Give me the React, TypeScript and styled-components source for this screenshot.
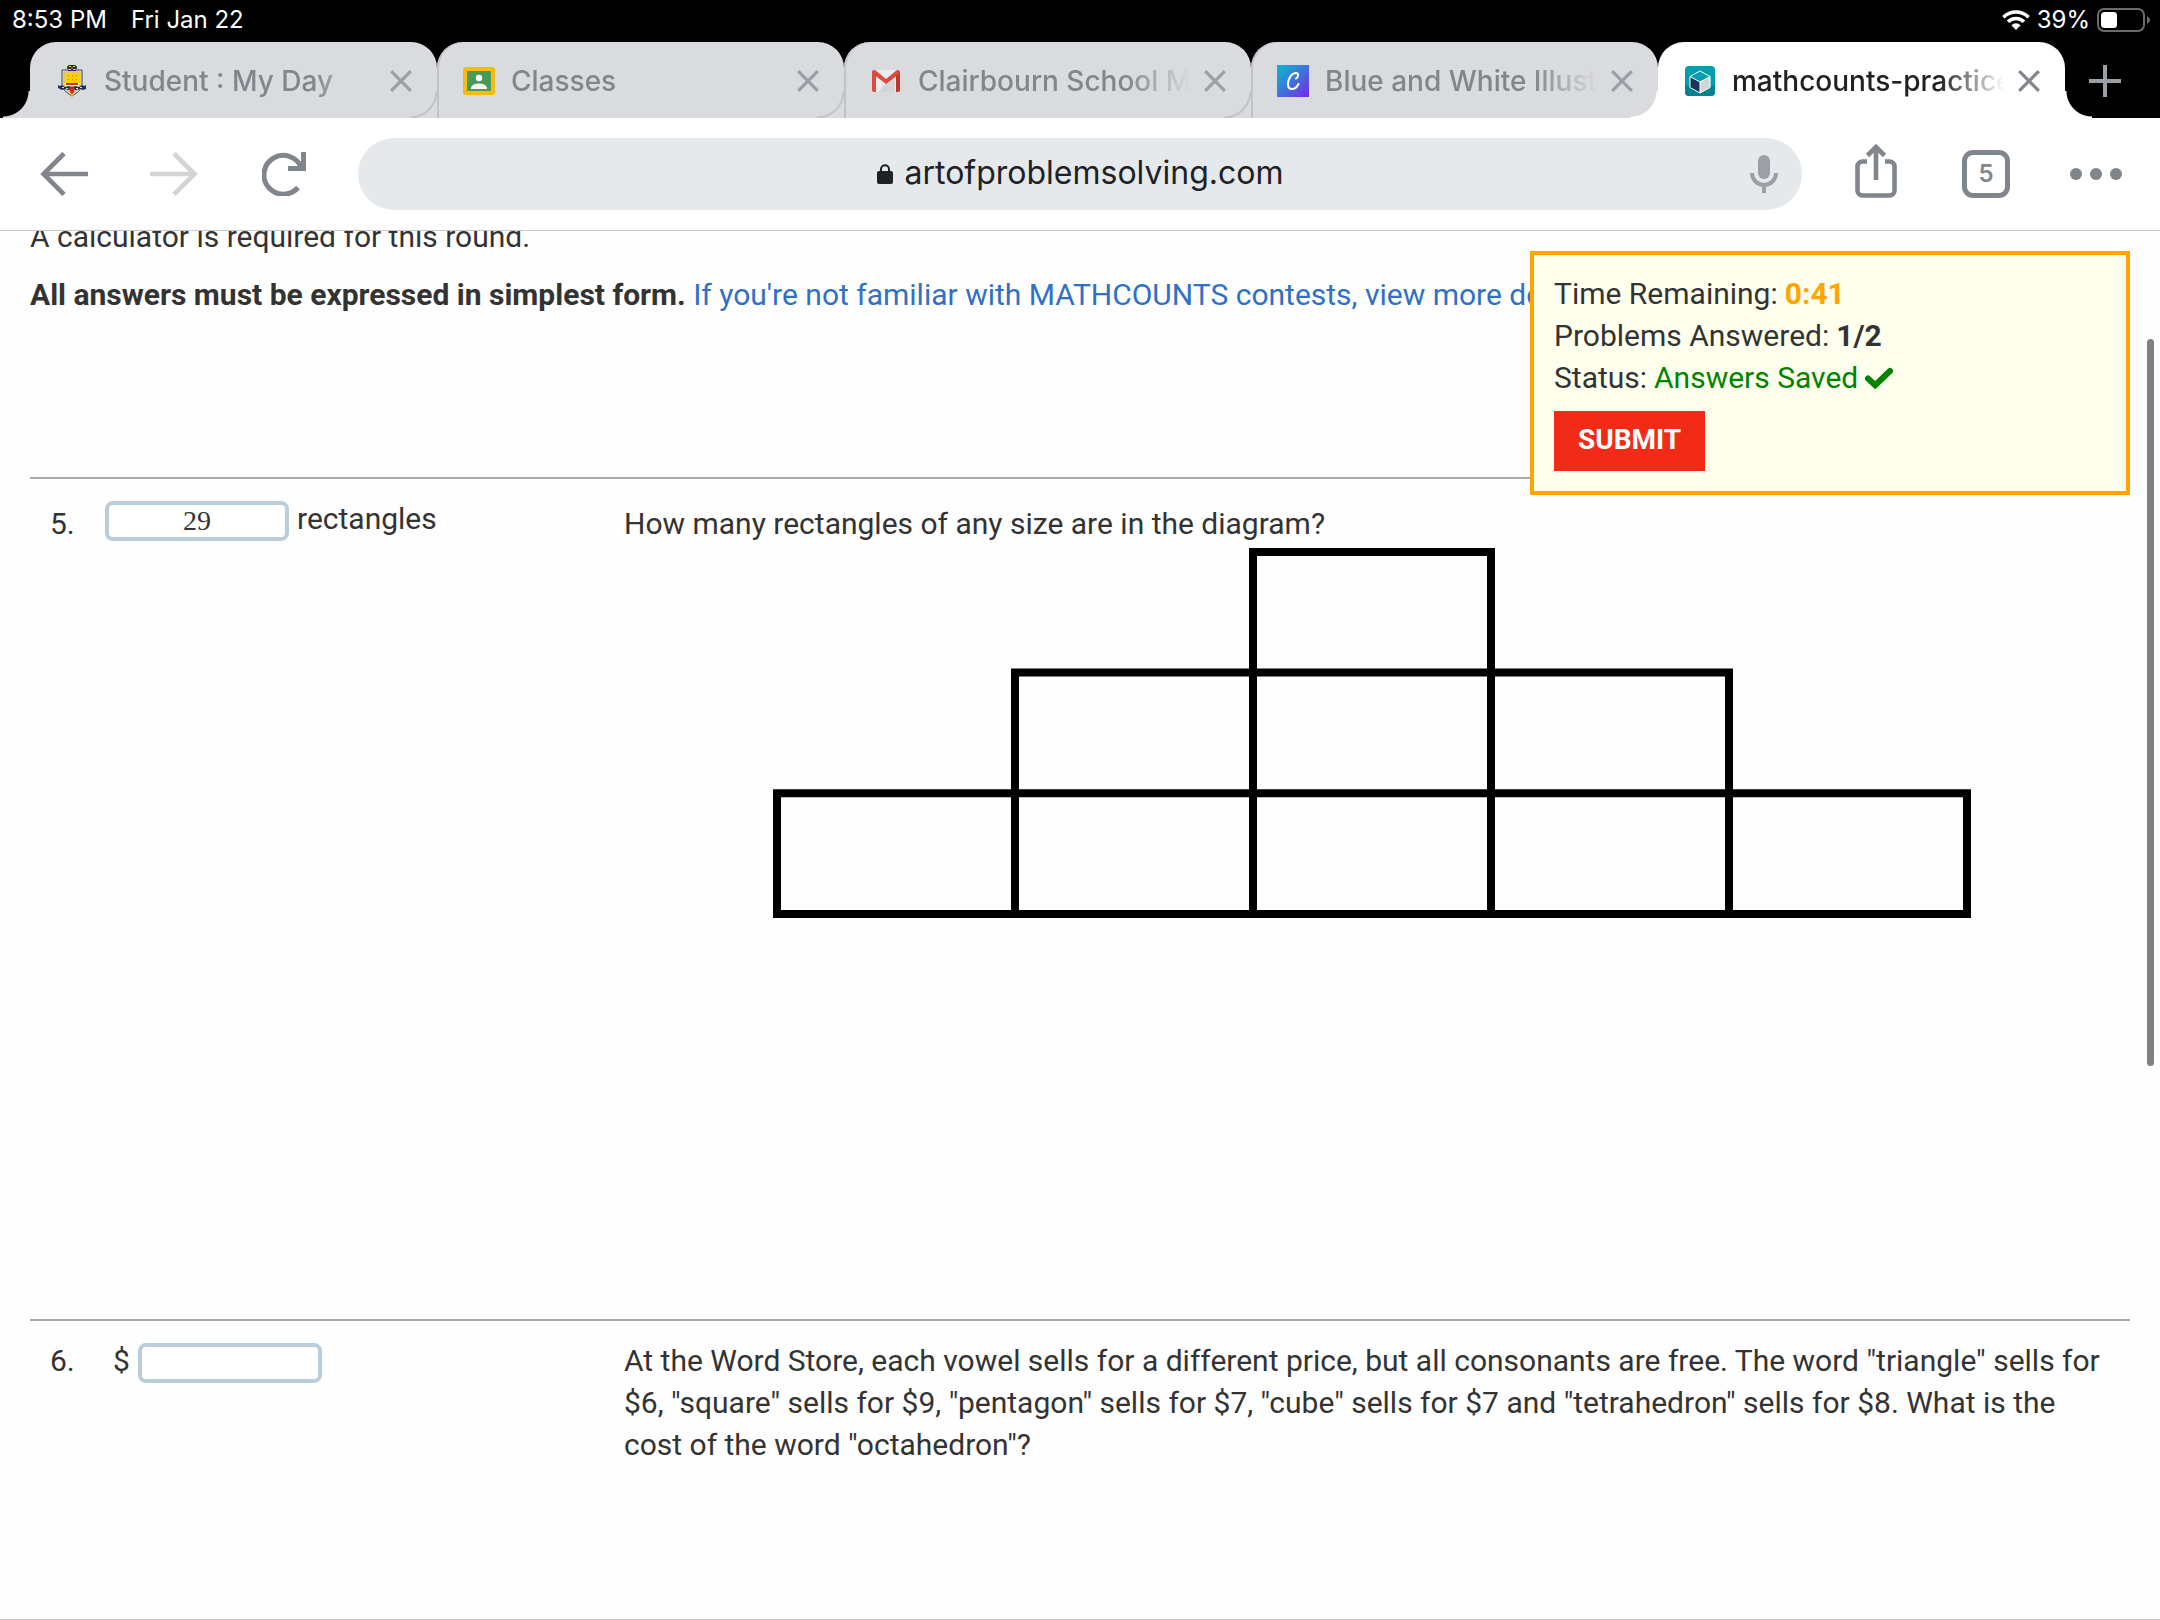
import React from "react";
import styled, { createGlobalStyle, css } from "styled-components";

const GlobalStyle = createGlobalStyle`
  *, *::before, *::after { box-sizing: border-box; }
  html, body { margin: 0; padding: 0; }
  body { background: #fefefe; }
  button, input { font: inherit; color: inherit; margin: 0; padding: 0; border: 0; background: none; }
  svg { display: block; flex: none; }
`;

const uiFont = `Inter, "Liberation Sans", sans-serif`;
const pageFont = `Roboto, "Liberation Sans", sans-serif`;
const tabGray = "#dadbdf";
const tabLine = "#c1c3c8";
const iconGray = "#80868b";

const Screen = styled.div`
  display: flex;
  flex-direction: column;
  height: 100vh;
  overflow: hidden;
  font-family: ${uiFont};
`;

/* ---------- status bar ---------- */

const StatusBar = styled.header`
  display: flex;
  justify-content: space-between;
  align-items: center;
  height: 42px;
  padding: 0 10px 2px 12px;
  background: #000;
  color: #fff;
  font-size: 24px;
  line-height: 28px;
`;

const StatusGroup = styled.div<{ $gap: number }>`
  display: flex;
  align-items: center;
  gap: ${(p) => p.$gap}px;
`;

/* ---------- tab strip ---------- */

const TabStrip = styled.nav`
  display: flex;
  height: 76px;
  padding-left: 30px;
  background: #000;
`;

const flare = (side: "left" | "right", fill: string, line: string) => css`
  content: "";
  position: absolute;
  bottom: 0;
  ${side}: -27px;
  width: 27px;
  height: 27px;
  background: radial-gradient(
    circle at ${side === "left" ? "0 0" : "100% 0"},
    transparent 25px,
    ${line} 26px,
    ${line} 27px,
    ${fill} 28px
  );
`;

const Tab = styled.div<{ $active?: boolean; $first?: boolean }>`
  position: relative;
  display: flex;
  align-items: center;
  flex: 1;
  min-width: 0;
  padding: 2px 25px 0 26px;
  border-radius: 26px 26px 0 0;
  background: ${(p) => (p.$active ? "#fff" : tabGray)};
  box-shadow: ${(p) => (p.$active || p.$first ? "none" : `inset 2px 0 0 ${tabLine}`)};
  color: ${(p) => (p.$active ? "#202124" : iconGray)};
  font-size: 28px;
  font-weight: 500;
  line-height: 36px;

  &::before {
    ${(p) =>
      flare(
        "left",
        p.$active ? "#fff" : tabGray,
        p.$active ? "#fff" : p.$first ? tabGray : tabLine
      )}
  }

  ${(p) =>
    p.$active &&
    css`
      &::after {
        ${flare("right", "#fff", "#fff")}
      }
    `}
`;

const Favicon = styled.span`
  display: flex;
  align-items: center;
  justify-content: center;
  flex: none;
  width: 32px;
  height: 32px;
  margin-right: 16px;
`;

const TabTitle = styled.span`
  flex: 1;
  min-width: 0;
  overflow: hidden;
  white-space: nowrap;
  mask-image: linear-gradient(to right, #000 calc(100% - 64px), transparent);
`;

const TabClose = styled.button<{ $active?: boolean }>`
  flex: none;
  margin-left: 14px;
  color: ${(p) => (p.$active ? iconGray : "#9aa0a6")};
`;

const NewTab = styled.button`
  flex: none;
  display: flex;
  align-items: center;
  width: 95px;
  padding: 2px 0 0 24px;
  color: #9aa0a6;
`;

/* ---------- toolbar ---------- */

const Toolbar = styled.div`
  display: flex;
  align-items: center;
  flex: none;
  height: 113px;
  padding: 0 9px 1px;
  border-bottom: 1px solid #c8c9cb;
  background: #fff;
`;

const ToolButton = styled.button`
  display: flex;
  align-items: center;
  justify-content: center;
  flex: none;
  width: 110px;
  height: 72px;
  color: ${iconGray};

  &:disabled {
    color: #d3d4d5;
  }
`;

const Omnibox = styled.form`
  display: grid;
  grid-template-columns: 1fr auto 1fr;
  align-items: center;
  flex: 1;
  height: 72px;
  margin: 0 19px;
  padding: 0 24px;
  border-radius: 36px;
  background: #e5e9ec;
  color: #202124;
`;

const Address = styled.label`
  grid-column: 2;
  display: flex;
  align-items: center;
  gap: 12px;
`;

const AddressInput = styled.input`
  field-sizing: content;
  padding-bottom: 2px;
  font-size: 32px;
  line-height: 40px;
  outline: none;
`;

const MicButton = styled.button`
  justify-self: end;
  color: #9aa0a6;
`;

const TabCount = styled.span`
  display: flex;
  align-items: center;
  justify-content: center;
  width: 48px;
  height: 48px;
  border: 5px solid ${iconGray};
  border-radius: 11px;
  font-size: 24px;
  font-weight: 600;
  line-height: 28px;
`;

/* ---------- page ---------- */

const Page = styled.main`
  position: relative;
  flex: 1;
  min-height: 0;
  overflow: hidden;
  border-bottom: 1px solid #c8c9cb;
  background: #fefefe;
  color: #333;
  font-family: ${pageFont};
  font-size: 30px;
  line-height: 42px;
`;

/* The document is scrolled so its first line is partly under the toolbar. */
const Scrolled = styled.div`
  margin-top: -15px;
  padding: 0 30px;
`;

const Intro = styled.p`
  margin: 0 0 16px;
  overflow: hidden;
  white-space: nowrap;
`;

const DetailsLink = styled.a`
  color: #3070c6;
  text-decoration: none;
`;

const ProblemList = styled.div`
  margin-top: 161px;
`;

const Problem = styled.section<{ $lead: number }>`
  display: grid;
  grid-template-columns: 55px 519px minmax(0, 1fr);
  min-height: 842px;
  padding: 19px 10px 19px 20px;
  border-top: 2px solid #aaa;
  --lead: ${(p) => p.$lead}px;
`;

const ProblemNumber = styled.div`
  line-height: var(--lead);
`;

const Answer = styled.label`
  display: flex;
  align-items: flex-start;
  gap: 8px;
`;

const Currency = styled.span`
  padding-left: 8px;
`;

const AnswerInput = styled.input`
  width: 184px;
  height: 40px;
  margin-top: 3px;
  padding-bottom: 1px;
  border: 4px solid #bbcddb;
  border-radius: 8px;
  background: #fff;
  font-family: "Liberation Serif", "Times New Roman", serif;
  font-size: 28px;
  line-height: 32px;
  text-align: center;
`;

const Question = styled.p`
  margin: 0;
  line-height: 42px;
`;

const QuestionLead = styled.span`
  display: block;
  line-height: var(--lead);
`;

const Diagram = styled.svg`
  width: 100%;
  max-width: 1198px;
  margin: -2px auto 0;
`;

const TimerPanel = styled.aside`
  position: absolute;
  top: 20px;
  right: 30px;
  width: 600px;
  padding: 18px 20px 20px;
  border: 4px solid #ffa500;
  background: #ffffee;
`;

const PanelLine = styled.div`
  display: flex;
  align-items: center;
  gap: 7px;
`;

const Countdown = styled.strong`
  color: #ffa500;
`;

const Saved = styled.span`
  display: flex;
  align-items: center;
  gap: 7px;
  color: #008400;
`;

const SubmitButton = styled.button`
  display: block;
  height: 60px;
  margin-top: 12px;
  padding: 0 24px 3px;
  background: #f12b17;
  color: #fff;
  font-size: 28px;
  font-weight: 700;
  line-height: 36px;
`;

const ScrollThumb = styled.div`
  position: absolute;
  top: 108px;
  right: 6px;
  width: 7px;
  height: 52.4%;
  border-radius: 4px;
  background: #808080;
`;

/* ---------- icons ---------- */

const WifiIcon = () => (
  <svg width="28" height="20" viewBox="0 0 28 20" aria-hidden="true">
    <g fill="none" stroke="#fff" strokeWidth="3.6">
      <path d="M1.4 7.2a18 18 0 0 1 25.2 0" />
      <path d="M6 11.8a11.4 11.4 0 0 1 16 0" />
    </g>
    <path d="M9.4 15.2a6.6 6.6 0 0 1 9.2 0L14 20z" fill="#fff" />
  </svg>
);

const BatteryIcon = () => (
  <svg width="53" height="24" viewBox="0 0 53 24" aria-hidden="true">
    <rect x="1" y="1" width="46" height="22" rx="6" fill="none" stroke="#6b6b6b" strokeWidth="2" />
    <rect x="4" y="4" width="16" height="16" rx="3.5" fill="#fff" />
    <path d="M50 8q3 1.500 3 4t-3 4z" fill="#6b6b6b" />
  </svg>
);

const CloseIcon = () => (
  <svg width="22" height="22" viewBox="0 0 22 22" fill="none" stroke="currentColor" strokeWidth="3.2" aria-hidden="true">
    <path d="M1.200 1.200l19.600 19.600M20.800 1.200L1.200 20.800" />
  </svg>
);

const PlusIcon = () => (
  <svg width="32" height="32" viewBox="0 0 32 32" fill="none" stroke="currentColor" strokeWidth="4" aria-hidden="true">
    <path d="M16 0v32M0 16h32" />
  </svg>
);

const CrestFavicon = () => (
  <svg width="28" height="32" viewBox="0 0 28 32" aria-hidden="true">
    <path d="M4 5h20v16q-2 6-10 10Q6 27 4 21z" fill="#f4f2dc" stroke="#27406f" strokeWidth="1" />
    <path d="M6 7h16v14q-2 4-8 8-6-4-8-8z" fill="none" stroke="#d9bd3a" strokeWidth="1.400" />
    <path d="M9 3q0-3 3-3h4q3 0 3 3l-1 3h-8z" fill="#1d2f5f" />
    <path d="M11 1h2v1h-2zM15 1h2v1h-2zM10 4h3v1h-3zM15 4h3v1h-3z" fill="#f3c800" />
    <path d="M13 2h2v2h-2z" fill="#d22a35" />
    <path d="M7 8h14v10H7z" fill="#fbcf00" />
    <path d="M10 10h1v1h-1zM14 10h1v1h-1zM18 10h1v1h-1zM10 14h1v1h-1zM14 14h1v1h-1zM18 14h1v1h-1z" fill="#b58b00" />
    <path d="M8 18h12v2H8z" fill="#d22a35" />
    <path d="M0 20l2 1 2-1 3 2 3-1 4 1 4-1 3 1 3-2 2 1 2-1v4l-3 1-3-1-4 1-4-1-4 1-3-1-3 1-4-2z" fill="#1d2f5f" />
    <path d="M4 22h2v1H4zM8 23h2v1H8zM18 23h2v1h-2zM22 22h2v1h-2z" fill="#e9e3b0" />
    <path d="M14 21l3 3-1 3-2 2-2-2-1-3z" fill="#d2283c" />
    <path d="M12 29h4l-2 3z" fill="#e2b500" />
  </svg>
);

const ClassroomFavicon = () => (
  <svg width="32" height="28" viewBox="0 0 32 28" aria-hidden="true">
    <rect width="32" height="28" rx="2" fill="#f6bc16" />
    <rect x="4" y="4" width="24" height="20" fill="#479a5a" />
    <circle cx="16" cy="11" r="3.200" fill="#fff" />
    <path d="M8 22v-1.500q1.500-4 8-4t8 4V22z" fill="#f4f7f4" />
  </svg>
);

const GmailFavicon = () => (
  <svg width="28" height="22" viewBox="0 0 28 22" aria-hidden="true">
    <path d="M2 0h24v22H2z" fill="#ececec" />
    <path d="M14 13l9-7v16H6z" fill="#d5d5d5" />
    <path d="M0 2v18q0 2 2 2h2V5z" fill="#dc4b3f" />
    <path d="M28 2v18q0 2-2 2h-2V5z" fill="#bd382e" />
    <path d="M0 2q0-2 2-2h1l11 9L25 0h1q2 0 2 2 0 1-1 2L14 14 1 4Q0 3 0 2z" fill="#dc4b3f" />
  </svg>
);

const CanvaFavicon = () => (
  <svg width="32" height="32" viewBox="0 0 32 32" aria-hidden="true">
    <defs>
      <linearGradient id="canva" x1="0" y1="0" x2="1" y2="1">
        <stop offset="0" stopColor="#06bccb" />
        <stop offset="0.5" stopColor="#3f74dc" />
        <stop offset="1" stopColor="#7a25e6" />
      </linearGradient>
    </defs>
    <rect width="32" height="32" fill="url(#canva)" />
    <path
      d="M19 13.500c2.500-1.500 3-5.500 0-5.500-4.500 0-8 6-8 11 0 3 1.600 5 4 5 3 0 5-2 6.500-5"
      fill="none"
      stroke="#fff"
      strokeWidth="2"
      strokeLinecap="round"
    />
  </svg>
);

const CubeFavicon = () => (
  <svg width="30" height="30" viewBox="0 0 30 30" aria-hidden="true">
    <rect width="30" height="30" rx="4" fill="#009fad" />
    <path d="M0 19q15 6 30 0v7q0 4-4 4H4q-4 0-4-4z" fill="#008391" />
    <path d="M15 5l10 5.500v11L15 27 5 21.500v-11z" fill="#009fad" />
    <path d="M5 10.500L15 16v11L5 21.500z" fill="#1b365d" />
    <path d="M25 10.500L15 16v11l10-5.500z" fill="#d2d3d5" />
    <path d="M15 5l10 5.500v11L15 27 5 21.500v-11zM5 10.500L15 16l10-5.500M15 16v11" fill="none" stroke="#fff" strokeWidth="1" />
  </svg>
);

const BackIcon = () => (
  <svg width="48" height="44" viewBox="0 0 48 44" fill="none" stroke="currentColor" strokeWidth="4.600" aria-hidden="true">
    <path d="M24 1.500L3.500 22 24 42.500M4 22h44" />
  </svg>
);

const ForwardIcon = () => (
  <svg width="48" height="44" viewBox="0 0 48 44" fill="none" stroke="currentColor" strokeWidth="4.600" aria-hidden="true">
    <path d="M24 1.500L44.500 22 24 42.500M44 22H0" />
  </svg>
);

const ReloadIcon = () => (
  <svg width="44" height="44" viewBox="0 0 44 44" fill="none" stroke="currentColor" strokeWidth="5" aria-hidden="true">
    <path d="M36 35.500A19.400 19.400 0 1 1 39.500 16" />
    <path d="M41.500 0v16.500H26" />
  </svg>
);

const LockIcon = () => (
  <svg width="16" height="20" viewBox="0 0 16 20" aria-hidden="true">
    <rect y="7" width="16" height="13" rx="2" fill="currentColor" />
    <path d="M4 8V5.200a4 4 0 0 1 8 0V8" fill="none" stroke="currentColor" strokeWidth="2" />
  </svg>
);

const MicIcon = () => (
  <svg width="28" height="38" viewBox="0 0 28 38" aria-hidden="true">
    <rect x="8" width="12" height="24" rx="6" fill="currentColor" />
    <path d="M2 18a12 12 0 0 0 24 0M14 30v8" fill="none" stroke="currentColor" strokeWidth="4" />
  </svg>
);

const ShareIcon = () => (
  <svg width="42" height="60" viewBox="0 4 42 60" fill="none" stroke="currentColor" strokeWidth="4.600" aria-hidden="true">
    <path d="M12 21.500H7.500a5 5 0 0 0-5 5v24a5 5 0 0 0 5 5h27a5 5 0 0 0 5-5v-24a5 5 0 0 0-5-5H30" />
    <path d="M21 40V8M12.500 15.500L21 7l8.500 8.500" />
  </svg>
);

const DotsIcon = () => (
  <svg width="54" height="12" viewBox="0 0 54 12" fill="currentColor" aria-hidden="true">
    <circle cx="7" cy="6" r="6" />
    <circle cx="27" cy="6" r="6" />
    <circle cx="47" cy="6" r="6" />
  </svg>
);

const CheckIcon = () => (
  <svg width="28" height="22" viewBox="0 0 28 22" aria-hidden="true">
    <path d="M3 11.500l7.200 6.700L25 4" fill="none" stroke="currentColor" strokeWidth="6" strokeLinejoin="miter" strokeLinecap="round" />
  </svg>
);

/* ---------- content ---------- */

const tabs = [
  { title: "Student : My Day", icon: <CrestFavicon /> },
  { title: "Classes", icon: <ClassroomFavicon /> },
  { title: "Clairbourn School Mail", icon: <GmailFavicon /> },
  { title: "Blue and White Illustrated", icon: <CanvaFavicon /> },
  { title: "mathcounts-practice", icon: <CubeFavicon />, active: true },
];

const StaircaseDiagram = () => (
  <Diagram viewBox="0 0 1198 370" role="img" aria-label="Rectangles stacked in rows of one, three and five">
    <path
      d="M480 4h238M242 124.600h714M4 245.300h1190M4 366h1190M4 245.300V366M242 124.600V366M480 4v362M718 4v362M956 124.600V366M1194 245.300V366"
      fill="none"
      stroke="#000"
      strokeWidth="8"
      strokeLinecap="square"
    />
  </Diagram>
);

export default function App() {
  return (
    <Screen>
      <GlobalStyle />
      <StatusBar>
        <StatusGroup $gap={24}>
          <span>8:53 PM</span>
          <span>Fri Jan 22</span>
        </StatusGroup>
        <StatusGroup $gap={7}>
          <WifiIcon />
          <span>39%</span>
          <BatteryIcon />
        </StatusGroup>
      </StatusBar>

      <TabStrip aria-label="Open tabs">
        {tabs.map((tab, i) => (
          <Tab key={tab.title} $active={tab.active} $first={i === 0}>
            <Favicon>{tab.icon}</Favicon>
            <TabTitle>{tab.title}</TabTitle>
            <TabClose type="button" $active={tab.active} aria-label="Close tab">
              <CloseIcon />
            </TabClose>
          </Tab>
        ))}
        <NewTab type="button" aria-label="New tab">
          <PlusIcon />
        </NewTab>
      </TabStrip>

      <Toolbar>
        <ToolButton type="button" aria-label="Back">
          <BackIcon />
        </ToolButton>
        <ToolButton type="button" aria-label="Forward" disabled>
          <ForwardIcon />
        </ToolButton>
        <ToolButton type="button" aria-label="Reload">
          <ReloadIcon />
        </ToolButton>
        <Omnibox>
          <Address>
            <LockIcon />
            <AddressInput type="text" aria-label="Address" defaultValue="artofproblemsolving.com" />
          </Address>
          <MicButton type="button" aria-label="Voice search">
            <MicIcon />
          </MicButton>
        </Omnibox>
        <ToolButton type="button" aria-label="Share">
          <ShareIcon />
        </ToolButton>
        <ToolButton type="button" aria-label="Show tabs">
          <TabCount>5</TabCount>
        </ToolButton>
        <ToolButton type="button" aria-label="More">
          <DotsIcon />
        </ToolButton>
      </Toolbar>

      <Page>
        <Scrolled>
          <Intro>A calculator is required for this round.</Intro>
          <Intro>
            <strong>All answers must be expressed in simplest form.</strong>{" "}
            <DetailsLink href="#details">
              If you're not familiar with MATHCOUNTS contests, view more details
            </DetailsLink>
          </Intro>
          <ProblemList>
            <Problem $lead={52}>
              <ProblemNumber>5.</ProblemNumber>
              <Answer>
                <AnswerInput type="text" aria-label="Answer to problem 5" defaultValue="29" />
                <span>rectangles</span>
              </Answer>
              <div>
                <Question>
                  <QuestionLead>How many rectangles of any size are in the diagram?</QuestionLead>
                </Question>
                <StaircaseDiagram />
              </div>
            </Problem>
            <Problem $lead={42}>
              <ProblemNumber>6.</ProblemNumber>
              <Answer>
                <Currency>$</Currency>
                <AnswerInput type="text" aria-label="Answer to problem 6" />
              </Answer>
              <Question>
                At the Word Store, each vowel sells for a different price, but all consonants are
                free. The word "triangle" sells for $6, "square" sells for $9, "pentagon" sells for
                $7, "cube" sells for $7 and "tetrahedron" sells for $8. What is the cost of the word
                "octahedron"?
              </Question>
            </Problem>
          </ProblemList>
        </Scrolled>

        <TimerPanel>
          <PanelLine>
            Time Remaining: <Countdown>0:41</Countdown>
          </PanelLine>
          <PanelLine>
            Problems Answered: <strong>1/2</strong>
          </PanelLine>
          <PanelLine>
            Status:{" "}
            <Saved>
              Answers Saved <CheckIcon />
            </Saved>
          </PanelLine>
          <SubmitButton type="button">SUBMIT</SubmitButton>
        </TimerPanel>
        <ScrollThumb />
      </Page>
    </Screen>
  );
}
